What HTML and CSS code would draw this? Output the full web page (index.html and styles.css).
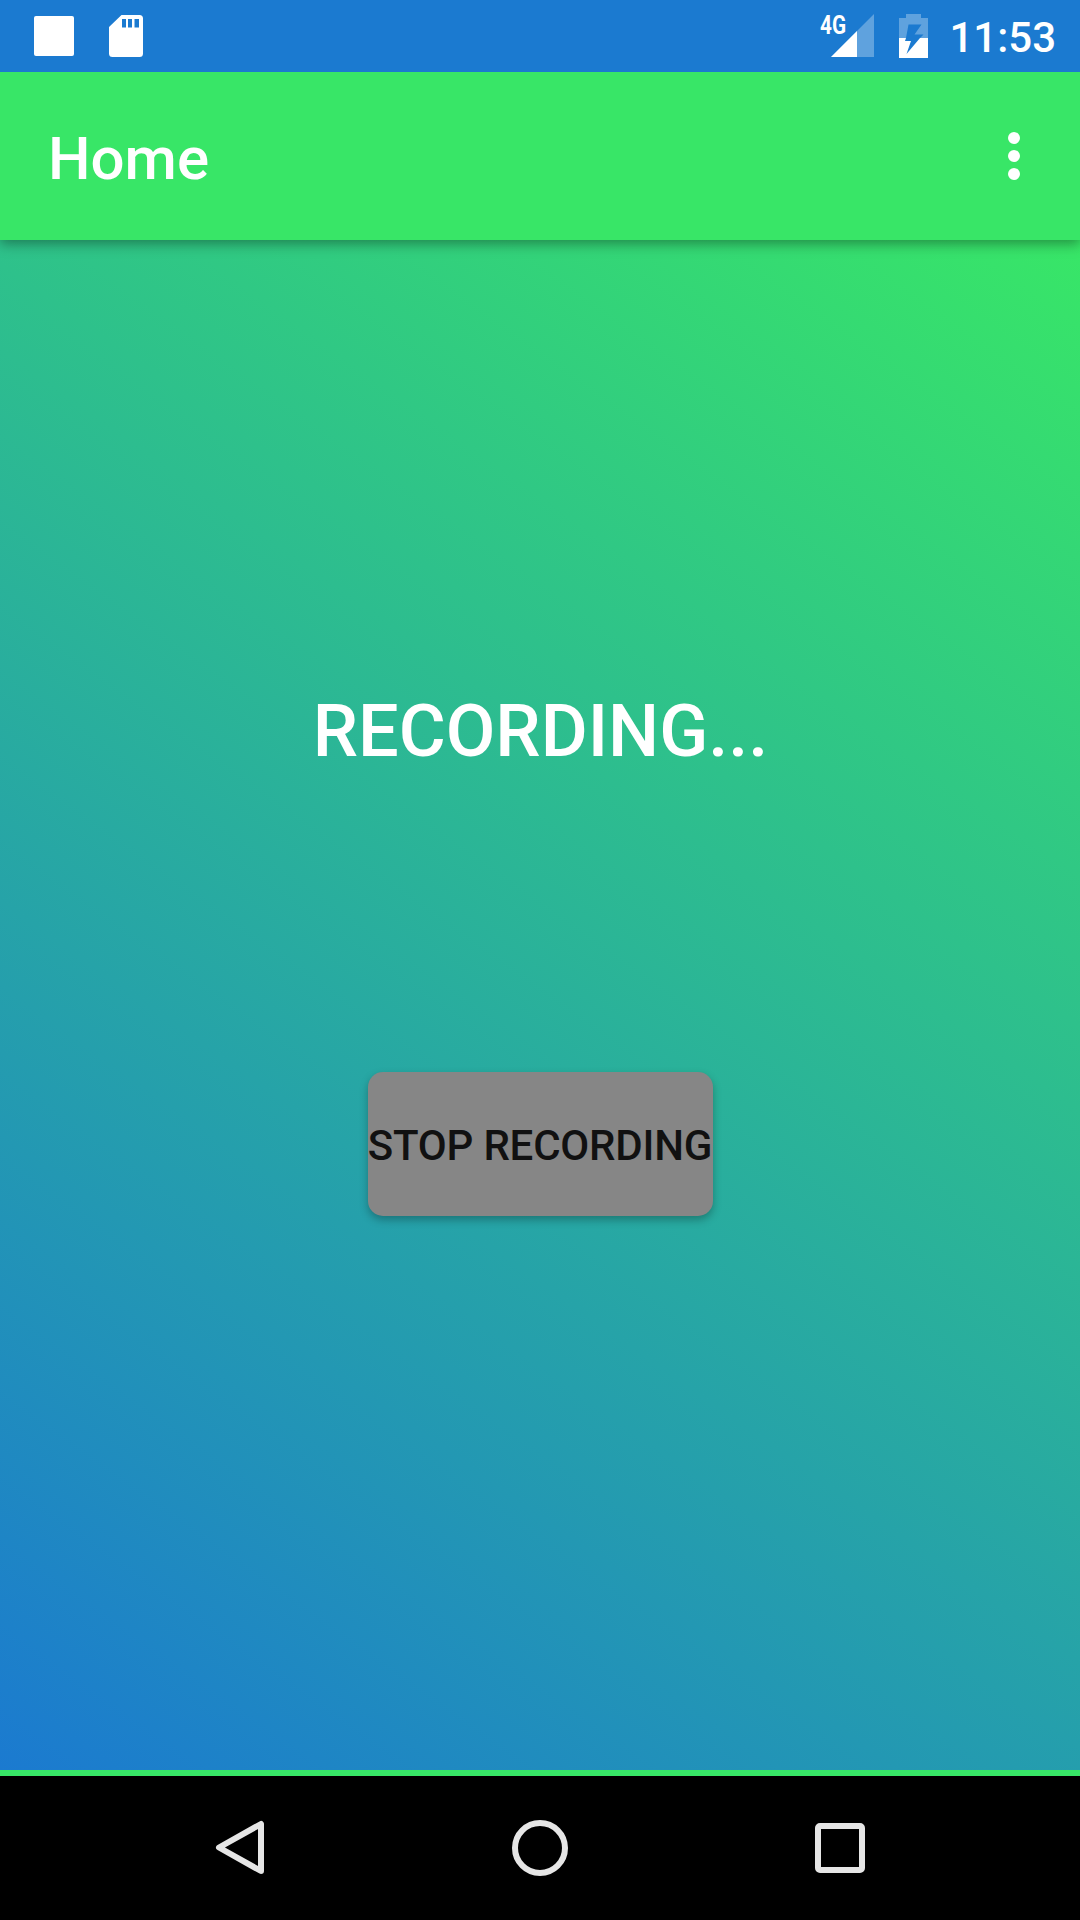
FILE: index.html
```html
<!DOCTYPE html>
<html lang="en">
<head>
<meta charset="utf-8">
<title>Home</title>
<link rel="stylesheet" href="styles.css">
</head>
<body>
<div class="screen">
  <header class="status">
    <svg class="notices" width="160" height="72" viewBox="0 0 160 72">
      <rect x="34" y="16" width="40" height="40" rx="2" fill="#fff"/>
      <path fill="#fff" fill-rule="evenodd" d="M121.500 15H139.500Q143 15 143 18.500V53.500Q143 57 139.500 57H112.500Q109 57 109 53.500V27ZM122 19V27.500H126V19ZM128 19V27.500H132V19ZM134.500 19V27.500H139V19Z"/>
    </svg>
    <div class="system">
      <div class="signal">
        <svg width="44" height="72" viewBox="0 0 44 72">
          <path fill="#fff" fill-opacity=".3" d="M43 14V57H0Z"/>
          <path fill="#fff" d="M26 31V57H0Z"/>
        </svg>
        <span class="network">4G</span>
      </div>
      <svg class="battery" width="29" height="72" viewBox="0 0 29 72">
        <path fill="#fff" fill-opacity=".3" fill-rule="evenodd" d="M0 38V18H7V14H22V18H29V38H21L24.500 34.500H15.500L22.500 24.500H9.500L7 38Z"/>
        <path fill="#fff" fill-rule="evenodd" d="M0 38H29V58H0ZM7 38L6 41H12L7.500 54L21 38Z"/>
      </svg>
      <span class="time">11:53</span>
    </div>
  </header>
  <div class="toolbar">
    <h1 class="title">Home</h1>
    <svg class="more" width="12" height="48" viewBox="0 0 12 48" fill="#fff"><circle cx="6" cy="6" r="6"/><circle cx="6" cy="24" r="6"/><circle cx="6" cy="42" r="6"/></svg>
  </div>
  <main class="content">
    <p class="message">RECORDING...</p>
    <button class="stop">STOP RECORDING</button>
  </main>
  <nav class="navbar">
    <svg width="60" height="60" viewBox="0 0 60 60"><path d="M51 6V53L9 29.500Z"/></svg>
    <svg width="60" height="60" viewBox="0 0 60 60"><circle cx="30" cy="30" r="25"/></svg>
    <svg width="60" height="60" viewBox="0 0 60 60"><rect x="8" y="8" width="44" height="44" rx="2"/></svg>
  </nav>
</div>
</body>
</html>
```
FILE: styles.css
```css
* { box-sizing: border-box; margin: 0; padding: 0; }
body { font-family: Roboto, sans-serif; font-weight: 500; color: #fff; }
svg { display: block; }
.screen { width: 1080px; height: 1920px; display: flex; flex-direction: column; overflow: hidden; }
.status { height: 72px; background: #1b7ad0; display: flex; justify-content: space-between; position: relative; z-index: 2; }
.system { display: flex; padding-right: 24px; }
.signal { position: relative; margin-right: 24px; }
.network { position: absolute; left: -11px; top: 13px; font-size: 25px; line-height: 25px; font-weight: 700; transform: scaleX(.83); transform-origin: left; }
.time { margin-left: 21px; font-size: 42px; line-height: 76px; }
.toolbar { height: 168px; background: #38e667; display: flex; align-items: center; justify-content: space-between; padding: 0 60px 0 48px; position: relative; z-index: 1; box-shadow: 0 4px 12px rgba(0,0,0,.36); }
.title { font-size: 60px; line-height: 70px; font-weight: 500; padding-top: 6px; }
.content { height: 1530px; background: linear-gradient(35.218deg, #1b7ad0, #38e667); display: flex; flex-direction: column; align-items: center; }
.message { margin-top: 450px; font-size: 72px; line-height: 84px; padding-left: 1px; }
.stop { margin-top: 298px; width: 345px; height: 144px; padding-top: 4px; border: 0; border-radius: 15px; background: #868686; color: #111; font: 500 42px/50px Roboto, sans-serif; letter-spacing: -.2px; white-space: nowrap; box-shadow: 0 4px 8px rgba(0,0,0,.28); }
.navbar { height: 150px; background: #000; border-top: 6px solid #38e667; display: flex; justify-content: space-between; align-items: center; padding: 0 210px; }
.navbar svg { fill: none; stroke: #e6e6e6; stroke-width: 6; stroke-linejoin: round; }
```
